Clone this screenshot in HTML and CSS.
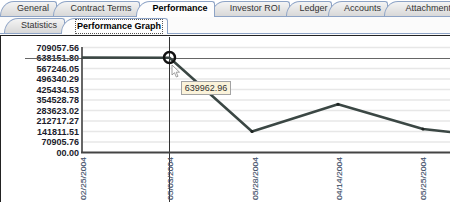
FILE: index.html
```html
<!doctype html>
<html lang="en">
	<head>
		<meta charset="UTF-8">
		<title>Performance Graph</title>
		<link rel="stylesheet" href="styles.css">
	</head>
	<body>
		<div class="tabs tabs-main">
			<div class="tab t-general">General</div>
			<div class="tab t-contract">Contract Terms</div>
			<div class="tab t-perf on">Performance</div>
			<div class="tab t-roi">Investor ROI</div>
			<div class="tab t-ledger">Ledger</div>
			<div class="tab t-accounts">Accounts</div>
			<div class="tab t-attach">Attachments</div>
		</div>
		<div class="panel">
			<div class="tabs tabs-sub">
				<div class="tab t-stats">Statistics</div>
				<div class="tab t-graph on"><span class="focus">Performance Graph</span></div>
			</div>
			<div class="chart">
				<svg width="449" height="166" viewBox="1 36 449 166">
					<!-- grid -->
					<g class="grid">
						<line x1="83" y1="47.5" x2="450" y2="47.5"/>
						<line x1="83" y1="68.5" x2="450" y2="68.5"/>
						<line x1="83" y1="79" x2="450" y2="79"/>
						<line x1="83" y1="89.5" x2="450" y2="89.5"/>
						<line x1="83" y1="100" x2="450" y2="100"/>
						<line x1="83" y1="110.5" x2="450" y2="110.5"/>
						<line x1="83" y1="121" x2="450" y2="121"/>
						<line x1="83" y1="131.5" x2="450" y2="131.5"/>
						<line x1="83" y1="142" x2="450" y2="142"/>
					</g>
					<!-- y labels -->
					<g class="ylab">
						<text x="79" y="50.5">709057.56</text>
						<text x="79" y="61">638151.80</text>
						<text x="79" y="71.5">567246.05</text>
						<text x="79" y="82">496340.29</text>
						<text x="79" y="92.5">425434.53</text>
						<text x="79" y="103">354528.78</text>
						<text x="79" y="113.5">283623.02</text>
						<text x="79" y="124">212717.27</text>
						<text x="79" y="134.5">141811.51</text>
						<text x="79" y="145">70905.76</text>
						<text x="79" y="155.5">00.00</text>
					</g>
					<!-- crosshair -->
					<line class="cross-h" x1="25" y1="58.5" x2="450" y2="58.5"/>
					<line class="cross-v" x1="169.5" y1="37" x2="169.5" y2="202"/>
					<!-- axes -->
					<line class="axis-y" x1="82" y1="47" x2="82" y2="153"/>
					<line class="axis-x" x1="81" y1="152.5" x2="450" y2="152.5"/>
					<!-- data -->
					<polyline class="series" points="82,57.5 169.5,57.7 252,131.5 338,104.3 423,129 452,132.3"/>
					<circle class="pt" cx="252" cy="131.5" r="1.6"/>
					<circle class="pt" cx="338" cy="104.3" r="1.6"/>
					<circle class="pt" cx="423" cy="129" r="1.6"/>
					<circle class="hover" cx="169.5" cy="57.5" r="5.5"/>
					<!-- x labels -->
					<g class="xlab">
						<text transform="translate(86,157) rotate(-90)" textLength="43" lengthAdjust="spacingAndGlyphs">02/25/2004</text>
						<text transform="translate(173,157) rotate(-90)" textLength="43" lengthAdjust="spacingAndGlyphs">05/03/2004</text>
						<text transform="translate(258,157) rotate(-90)" textLength="43" lengthAdjust="spacingAndGlyphs">05/28/2004</text>
						<text transform="translate(342,157) rotate(-90)" textLength="43" lengthAdjust="spacingAndGlyphs">04/14/2004</text>
						<text transform="translate(426,157) rotate(-90)" textLength="43" lengthAdjust="spacingAndGlyphs">05/25/2004</text>
					</g>
					<!-- cursor + tooltip -->
					<polygon class="cursor" points="172,65 172,75 174.5,72.7 176.3,77 178,76.3 176.2,72.2 179.5,72.2"/>
					<rect class="tip" x="181.5" y="81.5" width="49" height="13"/>
					<text class="tip-text" x="206" y="91.3">639962.96</text>
				</svg>
			</div>
		</div>
	</body>
</html>
```

FILE: styles.css
```css
html,body{
	margin:0;
	padding:0;
	overflow:hidden;
	background:#fff;
}
body{
	width:450px;
	height:202px;
	font-family:"Liberation Sans",Arial,sans-serif;
}
.tabs{
	display:flex;
	position:relative;
	height:16px;
	white-space:nowrap;
}
.tab{
	position:relative;
	isolation:isolate;
	box-sizing:border-box;
	height:15px;
	margin-top:1px;
	margin-right:-4px;
	padding-left:9px;
	line-height:15px;
	font-size:9px;
	color:#333;
	text-align:center;
	flex:none;
}
.tab::before{
	content:"";
	position:absolute;
	top:0;
	left:0;
	right:0;
	bottom:0;
	z-index:-1;
	background:linear-gradient(#f4f4f4,#d8d8d8);
	border:1px solid #8ea4c6;
	border-bottom:none;
	border-radius:14px 3px 0 0 / 15px 3px 0 0;
}
.tab.on{
	z-index:2;
	height:16px;
	margin-bottom:-1px;
	color:#000;
	font-weight:bold;
}
.tab.on::before{
	background:#fdfdfd;
}
.t-general{ width:57px; }
.t-contract{ width:87px; }
.t-perf{ width:79px; }
.t-roi{ width:79px; }
.t-ledger{ width:46px; }
.t-accounts{ width:60px; }
.t-attach{ width:84px; }

.panel{
	border-top:1px solid #8ea4c6;
	background:#fbfbfb;
}
.tabs-sub{
	border-bottom:1px solid #8ea4c6;
	padding-left:4px;
}
.t-stats{ width:61px; }
.t-graph{ width:107px; }
.tabs-sub .tab.on{
	line-height:13px;
}
.focus{
	display:inline-block;
	margin-top:1px;
	padding:0 1px;
	border:1px dotted #555;
}
.chart{
	margin-top:1px;
	height:166px;
	border-top:1px solid #222;
	border-left:1px solid #222;
	background:#fff;
	overflow:hidden;
}
.chart svg{
	display:block;
}
.grid line{
	stroke:#e7e7e7;
	stroke-width:1.5;
}
.ylab text{
	font-size:9px;
	font-weight:bold;
	fill:#1c1c2c;
	text-anchor:end;
}
.xlab text{
	font-size:8px;
	fill:#46526c;
	stroke:#46526c;
	stroke-width:.15;
	text-anchor:end;
}
.cross-h{
	stroke:#666;
	stroke-width:1;
}
.cross-v{
	stroke:#333;
	stroke-width:1;
}
.axis-y{
	stroke:#333;
	stroke-width:1.5;
}
.axis-x{
	stroke:#444;
	stroke-width:2;
}
.series{
	fill:none;
	stroke:#3b4744;
	stroke-width:2.5;
	stroke-linejoin:round;
}
.pt{
	fill:#1e2422;
}
.hover{
	fill:none;
	stroke:#111;
	stroke-width:2.5;
}
.cursor{
	fill:#fff;
	stroke:#888;
	stroke-width:.8;
}
.tip{
	fill:#fbf3da;
	stroke:#a3a3a3;
	stroke-width:1;
}
.tip-text{
	font-size:9px;
	fill:#333;
	text-anchor:middle;
}
```
